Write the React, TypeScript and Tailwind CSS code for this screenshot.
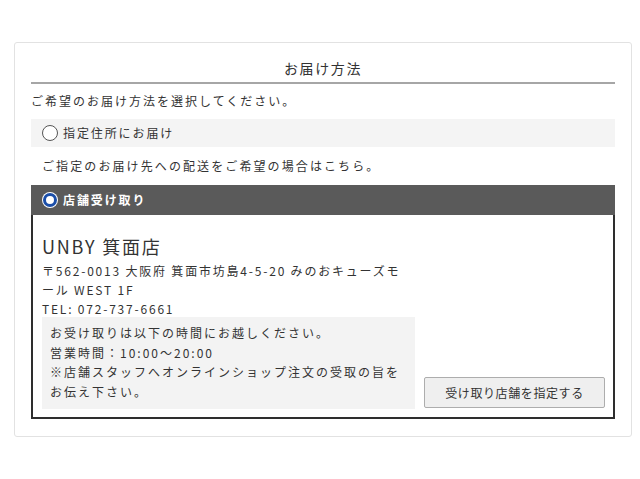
import React from "react";

const font = { fontFamily: '"Noto Sans CJK JP", "Noto Sans", sans-serif' };

export default function App() {
  return (
    <div className="w-[640px] h-[479px] bg-white pt-[42px] pl-[14px] text-[#333]" style={font}>
      <div className="w-[618px] border border-[#e2e2e2] rounded-[3px] px-[16px] pb-[17px]">
        <div className="pt-[15px] pb-[4px] text-center text-[14px] leading-[20px] tracking-[1.6px] border-b-2 border-[#a6a6a6]">
          お届け方法
        </div>
        <div className="mt-[7px] mb-[8px] text-[12px] leading-[20px] tracking-[2px]">
          ご希望のお届け方法を選択してください。
        </div>
        <div className="h-[28px] bg-[#f4f4f4] flex items-center pl-[11px] gap-[5px]">
          <span className="w-[16px] h-[16px] rounded-full border-[1.5px] border-[#555] bg-white" />
          <span className="text-[12px] leading-[20px] tracking-[1.9px]">指定住所にお届け</span>
        </div>
        <div className="h-[38px] flex items-center pl-[11px] text-[12px] tracking-[2.1px]">
          ご指定のお届け先への配送をご希望の場合はこちら。
        </div>
        <div className="h-[30px] bg-[#5a5a5a] flex items-center pl-[11px] gap-[5px]">
          <span className="w-[16px] h-[16px] rounded-full bg-white flex items-center justify-center">
            <span className="w-[14px] h-[14px] rounded-full border-[3px] border-[#1b4ea8] bg-white" />
          </span>
          <span className="text-[12px] leading-[20px] tracking-[1.9px] text-white font-bold">店舗受け取り</span>
        </div>
        <div className="border-2 border-t-0 border-[#2e2e2e] pl-[9px] pr-[8px] pt-[19px] pb-[8px]">
          <div className="text-[18px] leading-[24px] tracking-[1.8px]">UNBY 箕面店</div>
          <div className="mt-[3px] text-[12px] leading-[19px] tracking-[1.8px] whitespace-nowrap">
            <div>〒562-0013 大阪府 箕面市坊島4-5-20 みのおキューズモ</div>
            <div>ール WEST 1F</div>
            <div>TEL: 072-737-6661</div>
          </div>
          <div className="flex items-end gap-[9px] -mt-[1px]">
            <div className="w-[373px] bg-[#f3f3f3] pl-[8px] pt-[6px] pb-[8px] text-[12px] leading-[19.5px] tracking-[2px] whitespace-nowrap">
              <div>お受け取りは以下の時間にお越しください。</div>
              <div>営業時間：10:00〜20:00</div>
              <div>※店舗スタッフへオンラインショップ注文の受取の旨を</div>
              <div>お伝え下さい。</div>
            </div>
            <button className="w-[181px] h-[31px] mb-[1px] bg-[#efefef] border border-[#adadad] rounded-[2px] text-[12px] tracking-[0.6px] text-[#333]">
              受け取り店舗を指定する
            </button>
          </div>
        </div>
      </div>
    </div>
  );
}
